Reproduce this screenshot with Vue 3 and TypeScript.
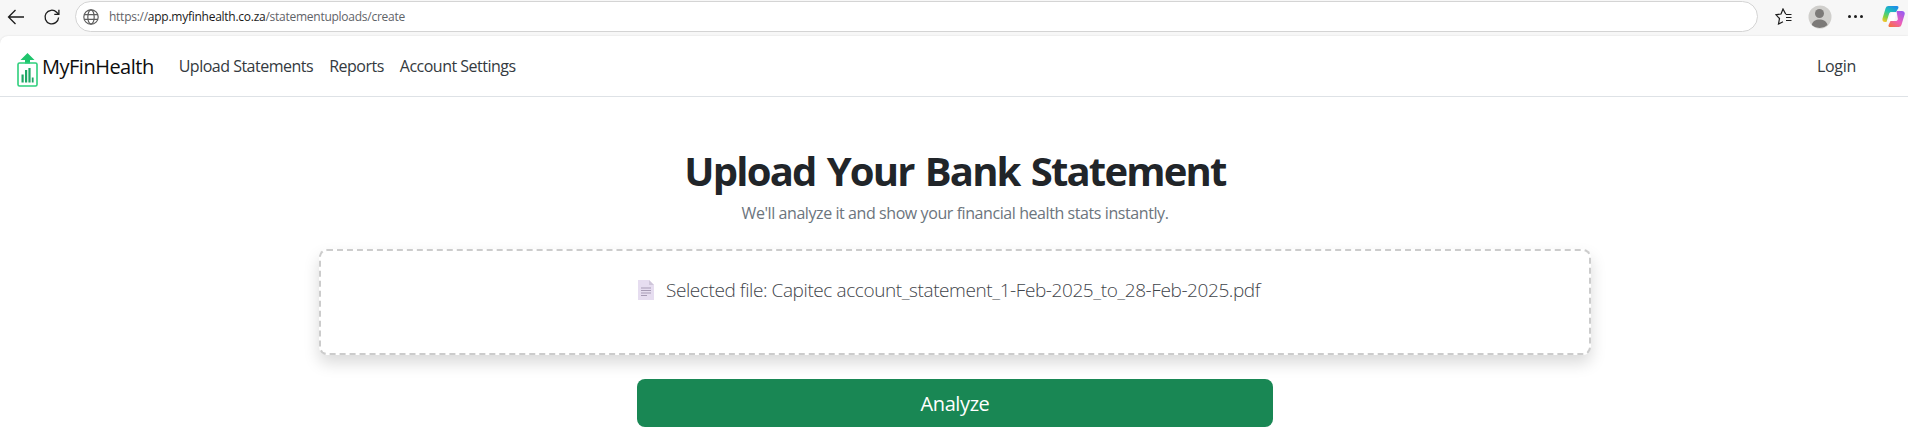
<script setup lang="ts">
const navLinks: string[] = ['Upload Statements', 'Reports', 'Account Settings']
const fileName = 'Capitec account_statement_1-Feb-2025_to_28-Feb-2025.pdf'
</script>

<template>
  <div class="window">
    <div class="chrome">
      <button class="tool back" aria-label="Back">
        <svg width="20" height="20" viewBox="0 0 20 20" fill="none" stroke="#1c1c1c" stroke-width="1.3">
          <path d="M18 10H2.5M9.5 3l-7 7 7 7" />
        </svg>
      </button>
      <button class="tool reload" aria-label="Reload">
        <svg width="20" height="20" viewBox="0 0 20 20" fill="none" stroke="#1c1c1c" stroke-width="1.3">
          <path d="M16.6 10.5a6.8 6.8 0 1 1-2-5.3l2 2" />
          <path d="M16.9 2.8v4.6h-4.6" />
        </svg>
      </button>
      <div class="address">
        <svg class="globe" width="18" height="18" viewBox="0 0 18 18" fill="none" stroke="#5f5f5f" stroke-width="1.2">
          <circle cx="9" cy="9" r="7.2" />
          <ellipse cx="9" cy="9" rx="3.2" ry="7.2" />
          <path d="M2.2 6.6h13.6M2.2 11.4h13.6" />
        </svg>
        <span class="url"><span class="dim">https://</span>app.myfinhealth.co.za<span class="dim">/statementuploads/create</span></span>
      </div>
      <div class="tools-right">
        <svg width="18" height="18" viewBox="0 0 18 18" fill="none" stroke="#1c1c1c" stroke-width="1.2">
          <path d="M10.800 6.200L8 1 6 6 1 6.800l3.500 3.700-1 5.500L8 13.800" />
          <path d="M11 6.500h5.500M11 9.500h5.500M11 12.500h5.500" />
        </svg>
        <svg class="avatar" width="24" height="24" viewBox="0 0 24 24">
          <circle cx="12" cy="12" r="11.500" fill="#d0cfcc" />
          <circle cx="11.500" cy="8.500" r="4.500" fill="#7c7a78" />
          <path d="M3.800 20c.8-4 4-5.500 7.700-5.500s7 1.500 8 5.500a11.500 11.500 0 0 1-15.700 0z" fill="#7c7a78" />
        </svg>
        <span class="dots"><i></i><i></i><i></i></span>
        <svg class="copilot" width="23" height="23" viewBox="0 0 23 23">
          <defs>
            <linearGradient id="cpL" x1="0.7" y1="0" x2="0.2" y2="1">
              <stop offset="0" stop-color="#1c8fe8" />
              <stop offset="0.4" stop-color="#22c6b0" />
              <stop offset="0.75" stop-color="#7fd13f" />
              <stop offset="1" stop-color="#f2c62c" />
            </linearGradient>
            <linearGradient id="cpR" x1="0.8" y1="0" x2="0.1" y2="1">
              <stop offset="0" stop-color="#9a5cf0" />
              <stop offset="0.55" stop-color="#ee5fb8" />
              <stop offset="1" stop-color="#f5703a" />
            </linearGradient>
          </defs>
          <path d="M6.500 1h8.500c1.500 0 1.800 1 1.300 2.200L14 7H9.500c-1.300 0-2 .6-2.400 1.800L4.500 17H3C1 17 0 15.500 .5 13.500L3.500 3.500C4 1.800 5 1 6.500 1z" fill="url(#cpL)" />
          <path d="M14.500 6H20c2 0 3.200 1.600 2.600 3.500l-3 10c-.5 1.700-1.500 2.500-3 2.500H8c-1.500 0-1.800-1-1.300-2.200L8.500 16h5c1.300 0 2-.6 2.400-1.800z" fill="url(#cpR)" />
          <path d="M9 8h5.500l-2.500 8H6.800z" fill="#fff" />
        </svg>
      </div>
    </div>

    <div class="page">
      <nav class="navbar">
        <a class="brand">
          <svg class="logo" width="21" height="34" viewBox="0 0 21 34" fill="none">
            <path d="M10.500 0L3.500 7H8V10.500H13V7H17.500z" fill="#1fc46c" />
            <rect x="1" y="10" width="19" height="23" rx="1.500" stroke="#2ecf7c" stroke-width="1.600" />
            <path d="M4.500 29.500h2.200v-8H4.500zM8 29.500h2.200V17H8zM11.400 29.500h2.200V15h-2.200zM14.800 29.500h1.800v-5h-1.800z" fill="#1fa866" />
          </svg>
          <span>MyFinHealth</span>
        </a>
        <a v-for="link in navLinks" :key="link" class="nav-link">{{ link }}</a>
        <a class="nav-link login">Login</a>
      </nav>

      <main class="content">
        <h1>Upload Your Bank Statement</h1>
        <p class="lead">We'll analyze it and show your financial health stats instantly.</p>
        <div class="dropzone">
          <div class="selected">
            <svg width="16" height="20" viewBox="0 0 16 20">
              <path d="M0 0h11l5 5v15H0z" fill="#e6ddf0" />
              <path d="M11 0l5 5h-5z" fill="#cfc6da" />
              <path d="M3 8h10M3 10.500h10M3 13h10M3 15.500h6" stroke="#a79bb5" stroke-width="1" />
            </svg>
            <span>Selected file: {{ fileName }}</span>
          </div>
        </div>
        <button class="analyze">Analyze</button>
      </main>
    </div>
  </div>
</template>

<style>
html, body { margin: 0; background: #f7f7f7; }
</style>

<style scoped>
.window { width: 1908px; height: 437px; overflow: hidden; background: #f7f7f7; font-family: "Open Sans", "Noto Sans", sans-serif; }
.chrome { height: 36px; display: flex; align-items: center; padding-bottom: 3px; box-sizing: border-box; }
.tool { width: 20px; height: 20px; padding: 0; border: none; background: none; display: flex; }
.back { margin-left: 6px; }
.reload { margin-left: 16px; }
.address { margin-left: 13px; flex: none; width: 1683px; height: 31px; box-sizing: border-box; border: 1px solid #d4d4d4; border-radius: 16px; background: #fff; display: flex; align-items: center; padding-left: 6px; }
.url { margin-left: 9px; font-size: 12px; color: #1a1a1a; letter-spacing: -.26px; }
.dim { color: #5f6368; }
.tools-right { flex: none; display: flex; align-items: center; padding-left: 17px; }
.avatar { margin-left: 15px; }
.dots { margin-left: 16px; display: flex; gap: 3px; }
.dots i { width: 3px; height: 3px; border-radius: 50%; background: #1c1c1c; }
.copilot { margin-left: 19px; }
.page { height: 401px; background: #fff; border-top-left-radius: 8px; box-shadow: 0 0 2px rgba(0,0,0,.12); }
.navbar { height: 61px; box-sizing: border-box; display: flex; align-items: center; padding: 0 17px; border-bottom: 1px solid #dee2e6; }
.brand { display: flex; align-items: center; gap: 4px; font-size: 20px; color: #0d0d0d; margin-right: 25px; letter-spacing: -.5px; }
.logo { margin-top: 8px; }
.nav-link { font-size: 16px; color: #343a40; margin-right: 16px; letter-spacing: -.5px; }
.login { margin-left: auto; margin-right: 35px; letter-spacing: -.3px; }
.content { display: flex; flex-direction: column; align-items: center; padding-left: 2px; }
h1 { margin: 50px 0 0; font-size: 40px; line-height: 48px; font-weight: 700; color: #212529; letter-spacing: -1.8px; word-spacing: 2.500px; }
.lead { margin: 6px 0 0; font-size: 16px; line-height: 24px; color: #6c757d; letter-spacing: -.42px; }
.dropzone { margin-top: 24px; width: 1272px; height: 106px; box-sizing: border-box; border: 2px dashed #ccc; border-radius: 8px; background: #fff; box-shadow: 0 8px 16px rgba(0,0,0,.15); padding-top: 26px; display: flex; justify-content: center; }
.selected { display: flex; align-items: flex-start; gap: 12px; padding-right: 12px; font-size: 19px; line-height: 27px; color: #3f454b; font-weight: 300; height: 27px; letter-spacing: -.41px; }
.selected svg { margin-top: 3px; }
.analyze { margin-top: 24px; width: 636px; height: 48px; border: none; border-radius: 8px; background: #198754; color: #fff; font: 500 20px "Open Sans", "Noto Sans", sans-serif; letter-spacing: -.4px; }
</style>
